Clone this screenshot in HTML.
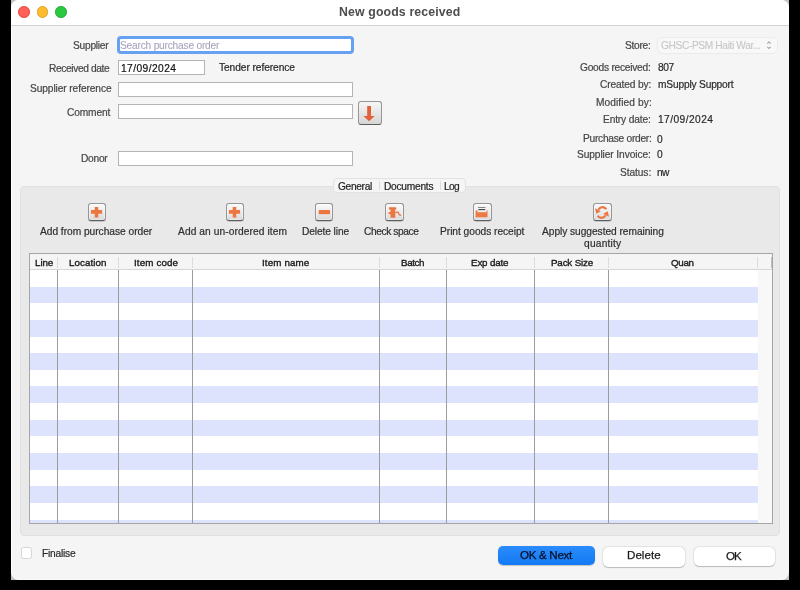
<!DOCTYPE html>
<html><head><meta charset="utf-8">
<style>
html,body{margin:0;padding:0;}
body{width:800px;height:590px;background:#000;position:relative;overflow:hidden;font-family:"Liberation Sans",sans-serif;}
div{box-sizing:border-box;}
.a{position:absolute;}
.t{position:absolute;white-space:nowrap;transform-origin:0 0;will-change:transform;}
.inp{position:absolute;background:#fff;border:1px solid #b4b4b4;}
.ico{position:absolute;width:18.4px;height:18.3px;border:1px solid #969696;border-bottom-color:#5c5c5c;border-radius:3px;background:linear-gradient(#fafafa,#ececec 50%,#dadada);box-shadow:0 .5px .5px rgba(0,0,0,.3),inset 0 0 0 .5px rgba(255,255,255,.7);}
.vl{position:absolute;top:270px;height:253px;width:1px;background:#9c9c9c;}
.hl{position:absolute;top:257px;height:11px;width:1px;background:#dcdcdc;}
.btn{position:absolute;background:#fff;border-radius:5px;box-shadow:0 0 0 .5px rgba(0,0,0,.11),0 .7px 1px rgba(0,0,0,.2);}
</style></head><body>
<!-- window -->
<div class="a" style="left:11px;top:0;width:778px;height:580px;background:#c4c4c4;"></div>
<div class="a" style="left:11px;top:0;width:778px;height:580px;background:#f5f5f5;border-radius:8px;border-left:1px solid #fff;border-bottom:1px solid #fafafa;"></div>
<div class="a" style="left:11px;top:0;width:778px;height:25px;background:#fff;border-radius:8px 8px 0 0;"></div>
<div class="a" style="left:11px;top:25px;width:778px;height:1px;background:#d3d3d3;"></div>
<div class="a" style="left:18px;top:6.1px;width:11.6px;height:11.6px;border-radius:50%;background:#fe5f57;border:.5px solid #e9473f;"></div>
<div class="a" style="left:36.5px;top:6.1px;width:11.6px;height:11.6px;border-radius:50%;background:#febc2e;border:.5px solid #dea123;"></div>
<div class="a" style="left:55px;top:6.1px;width:11.6px;height:11.6px;border-radius:50%;background:#28c840;border:.5px solid #1eae30;"></div>

<!-- inputs -->
<div class="a" style="left:117px;top:36px;width:237px;height:18px;border:3px solid #66a1f2;border-radius:4px;background:#fff;"></div>
<div class="inp" style="left:118px;top:60px;width:86.5px;height:15px;"></div>
<div class="inp" style="left:118px;top:82px;width:235px;height:15px;"></div>
<div class="inp" style="left:118px;top:104px;width:235px;height:15px;"></div>
<div class="inp" style="left:118px;top:151px;width:235px;height:15px;"></div>
<div class="ico" style="left:358px;top:101px;width:23.5px;height:23.5px;border-bottom-width:1.5px;box-shadow:none;background:linear-gradient(#f6f6f6,#e6e6e6 50%,#d6d6d6);"></div>
<svg class="a" style="left:358px;top:101px" width="24" height="24" viewBox="0 0 24 24"><path d="M9.2 5h3.8v10h3.8l-5.7 5.2-5.7-5.2h3.8z" fill="#e1613b"/></svg>

<!-- store dropdown -->
<div class="a" style="left:657.5px;top:38px;width:119.5px;height:15px;border-radius:4px;background:#f8f8f8;box-shadow:0 0 0 .5px #e2e2e2;"></div>
<svg class="a" style="left:765px;top:40px" width="8" height="11" viewBox="0 0 8 11"><path d="M2.3 3.6 4 1.9 5.7 3.6M2.3 6.8 4 8.5 5.7 6.8" fill="none" stroke="#a8a8a8" stroke-width="1.1"/></svg>

<!-- panel -->
<div class="a" style="left:19.5px;top:185.5px;width:760.5px;height:350px;background:#e9e9e9;border:1px solid #e1e1e1;border-radius:4px;"></div>
<div class="a" style="left:333px;top:178px;width:132.5px;height:15px;background:#f5f5f5;border:1px solid #e2e2e2;border-radius:4px;"></div>
<div class="a" style="left:379px;top:181px;width:1px;height:9px;background:#dcdcdc;"></div>
<div class="a" style="left:440px;top:181px;width:1px;height:9px;background:#dcdcdc;"></div>

<!-- toolbar icons -->
<div class="ico" style="left:88px;top:202.5px;"></div>
<div class="ico" style="left:225.6px;top:202.5px;"></div>
<div class="ico" style="left:315px;top:202.5px;"></div>
<div class="ico" style="left:385.4px;top:202.5px;"></div>
<div class="ico" style="left:473.4px;top:202.5px;"></div>
<div class="ico" style="left:593.4px;top:202.5px;"></div>
<svg class="a" style="left:88px;top:202.5px" width="18" height="18" viewBox="0 0 18 18"><path d="M6.7 4h3.6v3.1h3.8v3.6h-3.8v3.8H6.7v-3.8H2.9V7.1h3.8z" fill="#eb7641"/></svg>
<svg class="a" style="left:225.6px;top:202.5px" width="18" height="18" viewBox="0 0 18 18"><path d="M6.7 4h3.6v3.1h3.8v3.6h-3.8v3.8H6.7v-3.8H2.9V7.1h3.8z" fill="#eb7641"/></svg>
<svg class="a" style="left:315px;top:202.5px" width="18" height="18" viewBox="0 0 18 18"><path d="M3.7 7h11.3v4.2H3.7z" fill="#eb7641"/></svg>
<svg class="a" style="left:385.4px;top:202.5px" width="18" height="18" viewBox="0 0 18 18"><path d="M3.9 4.3h7.3v2.2H10.3v8.2H5.5v-3.3L2.4 10l3.1-1.3V6.5H3.9z" fill="#eb7641"/><path d="M10.3 9.6 13 9l1.5 3 1.6.3" fill="none" stroke="#eb7641" stroke-width="1.3"/></svg>
<svg class="a" style="left:473.4px;top:202.5px" width="18" height="18" viewBox="0 0 18 18"><path d="M5 4.1h7.5v.8H5z" fill="#6a6a6a"/><path d="M5.4 6.2h6.8v.9H5.4z" fill="#1a1a1a"/><path d="M2.6 7.4h2v1.8h8.8V7.4h1.1v6.8H2.6z" fill="#ec7a42"/></svg>
<svg class="a" style="left:593.4px;top:202.5px" width="18" height="18" viewBox="0 0 18 18"><path d="M13.3 6.3C11.5 3.3 7.2 3.4 5.4 6.8" fill="none" stroke="#eb7641" stroke-width="2.2"/><path d="M2 5.3 7.8 8.3 3.3 10.8z" fill="#eb7641"/><path d="M4.7 12.7C6.5 15.7 10.8 15.6 12.6 12.2" fill="none" stroke="#eb7641" stroke-width="2.2"/><path d="M16 13.7 10.2 10.7 14.7 8.2z" fill="#eb7641"/></svg>

<!-- table -->
<div class="a" style="left:28.5px;top:253px;width:744.5px;height:271px;background:#f8f8f8;border:1px solid #a6a6a6;"></div>
<div class="a" style="left:29.5px;top:254px;width:742.5px;height:15.5px;background:#f5f5f5;border-bottom:1px solid #d6d6d6;"></div>
<div class="a" style="left:29.5px;top:270px;width:728.8px;height:253px;background:repeating-linear-gradient(#fff 0,#fff 16.64px,#dee3fd 16.64px,#dee3fd 33.28px);"></div>
<div class="hl" style="left:57px"></div><div class="hl" style="left:118px"></div><div class="hl" style="left:192px"></div><div class="hl" style="left:379px"></div><div class="hl" style="left:446px"></div><div class="hl" style="left:534px"></div><div class="hl" style="left:608px"></div><div class="hl" style="left:757px"></div><div class="hl" style="left:771px;background:#bdbdbd"></div>
<div class="vl" style="left:57px"></div><div class="vl" style="left:118px"></div><div class="vl" style="left:192px"></div><div class="vl" style="left:379px"></div><div class="vl" style="left:446px"></div><div class="vl" style="left:534px"></div><div class="vl" style="left:608px"></div>

<!-- bottom -->
<div class="a" style="left:21.2px;top:547.2px;width:11.2px;height:11.4px;background:#fff;border:1.3px solid #d6d6d6;border-radius:2.5px;"></div>
<div class="a" style="left:498px;top:546.2px;width:97px;height:19px;border-radius:5px;background:linear-gradient(#2a8bfb,#137af3);box-shadow:0 .5px 1px rgba(0,0,0,.2);"></div>
<div class="btn" style="left:603px;top:547px;width:81.7px;height:19.5px;"></div>
<div class="btn" style="left:694px;top:547.2px;width:81.2px;height:19.3px;"></div>

<div class="t" style="left:338.60px;top:3.90px;font-size:12.3px;line-height:16px;color:#4d4d4d;font-weight:bold;letter-spacing:0.141px;">New goods received</div>
<div class="t" style="left:73.10px;top:39.25px;font-size:10.2px;line-height:13px;color:#454545;-webkit-text-stroke:0.2px;letter-spacing:-0.243px;">Supplier</div>
<div class="t" style="left:49.40px;top:61.75px;font-size:10.2px;line-height:13px;color:#454545;-webkit-text-stroke:0.2px;letter-spacing:-0.367px;">Received date</div>
<div class="t" style="left:29.90px;top:82.40px;font-size:10.2px;line-height:13px;color:#454545;-webkit-text-stroke:0.2px;letter-spacing:-0.100px;">Supplier reference</div>
<div class="t" style="left:66.50px;top:106.30px;font-size:10.2px;line-height:13px;color:#454545;-webkit-text-stroke:0.2px;letter-spacing:-0.150px;">Comment</div>
<div class="t" style="left:81.40px;top:152.00px;font-size:10.2px;line-height:13px;color:#454545;-webkit-text-stroke:0.2px;letter-spacing:-0.250px;">Donor</div>
<div class="t" style="left:120.25px;top:39.25px;font-size:10.2px;line-height:13px;color:#a9a4bc;-webkit-text-stroke:0.1px;letter-spacing:-0.212px;">Search purchase order</div>
<div class="t" style="left:121.00px;top:61.50px;font-size:10.2px;line-height:13px;color:#111;-webkit-text-stroke:0.2px;letter-spacing:0.444px;">17/09/2024</div>
<div class="t" style="left:219.00px;top:60.50px;font-size:10.2px;line-height:13px;color:#262626;-webkit-text-stroke:0.2px;letter-spacing:-0.067px;">Tender reference</div>
<div class="t" style="left:625.00px;top:39.25px;font-size:10.2px;line-height:13px;color:#454545;-webkit-text-stroke:0.2px;letter-spacing:-0.280px;">Store:</div>
<div class="t" style="left:580.00px;top:60.50px;font-size:10.2px;line-height:13px;color:#454545;-webkit-text-stroke:0.2px;letter-spacing:-0.243px;">Goods received:</div>
<div class="t" style="left:600.00px;top:78.00px;font-size:10.2px;line-height:13px;color:#454545;-webkit-text-stroke:0.2px;letter-spacing:-0.140px;">Created by:</div>
<div class="t" style="left:595.90px;top:95.70px;font-size:10.2px;line-height:13px;color:#454545;-webkit-text-stroke:0.2px;letter-spacing:0.073px;">Modified by:</div>
<div class="t" style="left:603.20px;top:113.30px;font-size:10.2px;line-height:13px;color:#454545;-webkit-text-stroke:0.2px;letter-spacing:-0.150px;">Entry date:</div>
<div class="t" style="left:582.50px;top:131.50px;font-size:10.2px;line-height:13px;color:#454545;-webkit-text-stroke:0.2px;letter-spacing:-0.264px;">Purchase order:</div>
<div class="t" style="left:577.30px;top:148.30px;font-size:10.2px;line-height:13px;color:#454545;-webkit-text-stroke:0.2px;letter-spacing:-0.094px;">Supplier Invoice:</div>
<div class="t" style="left:620.30px;top:166.30px;font-size:10.2px;line-height:13px;color:#454545;-webkit-text-stroke:0.2px;letter-spacing:-0.083px;">Status:</div>
<div class="t" style="left:657.50px;top:60.50px;font-size:10.2px;line-height:13px;color:#2a2a2a;-webkit-text-stroke:0.2px;letter-spacing:-0.375px;">807</div>
<div class="t" style="left:657.50px;top:78.00px;font-size:10.2px;line-height:13px;color:#2a2a2a;-webkit-text-stroke:0.2px;letter-spacing:-0.179px;">mSupply Support</div>
<div class="t" style="left:657.50px;top:113.30px;font-size:10.2px;line-height:13px;color:#2a2a2a;-webkit-text-stroke:0.2px;letter-spacing:0.444px;">17/09/2024</div>
<div class="t" style="left:657.00px;top:132.50px;font-size:10.2px;line-height:13px;color:#2a2a2a;-webkit-text-stroke:0.2px;">0</div>
<div class="t" style="left:657.00px;top:148.30px;font-size:10.2px;line-height:13px;color:#2a2a2a;-webkit-text-stroke:0.2px;">0</div>
<div class="t" style="left:657.20px;top:166.30px;font-size:10.2px;line-height:13px;color:#2a2a2a;-webkit-text-stroke:0.2px;letter-spacing:-0.700px;">nw</div>
<div class="t" style="left:660.50px;top:39.00px;font-size:10.2px;line-height:13px;color:#c6c6c6;-webkit-text-stroke:0.1px;letter-spacing:-0.375px;">GHSC-PSM Haiti War...</div>
<div class="t" style="left:338.40px;top:180.10px;font-size:10.2px;line-height:13px;color:#222;-webkit-text-stroke:0.2px;letter-spacing:-0.333px;">General</div>
<div class="t" style="left:383.60px;top:180.10px;font-size:10.2px;line-height:13px;color:#222;-webkit-text-stroke:0.2px;letter-spacing:-0.250px;">Documents</div>
<div class="t" style="left:444.40px;top:180.10px;font-size:10.2px;line-height:13px;color:#222;-webkit-text-stroke:0.2px;letter-spacing:-0.700px;">Log</div>
<div class="t" style="left:39.50px;top:225.40px;font-size:10.2px;line-height:13px;color:#2e2e2e;-webkit-text-stroke:0.2px;letter-spacing:-0.023px;">Add from purchase order</div>
<div class="t" style="left:178.10px;top:225.40px;font-size:10.2px;line-height:13px;color:#2e2e2e;-webkit-text-stroke:0.2px;letter-spacing:0.090px;">Add an un-ordered item</div>
<div class="t" style="left:301.50px;top:225.40px;font-size:10.2px;line-height:13px;color:#2e2e2e;-webkit-text-stroke:0.2px;letter-spacing:-0.100px;">Delete line</div>
<div class="t" style="left:363.50px;top:225.40px;font-size:10.2px;line-height:13px;color:#2e2e2e;-webkit-text-stroke:0.2px;letter-spacing:-0.400px;">Check space</div>
<div class="t" style="left:440.00px;top:225.40px;font-size:10.2px;line-height:13px;color:#2e2e2e;-webkit-text-stroke:0.2px;letter-spacing:-0.028px;">Print goods receipt</div>
<div class="t" style="left:541.50px;top:225.40px;font-size:10.2px;line-height:13px;color:#2e2e2e;-webkit-text-stroke:0.2px;letter-spacing:-0.042px;">Apply suggested remaining</div>
<div class="t" style="left:584.00px;top:236.50px;font-size:10.2px;line-height:13px;color:#2e2e2e;-webkit-text-stroke:0.2px;letter-spacing:0.214px;">quantity</div>
<div class="t" style="left:34.50px;top:256.20px;font-size:9.8px;line-height:13px;color:#1a1a1a;-webkit-text-stroke:0.35px;letter-spacing:-0.067px;">Line</div>
<div class="t" style="left:69.00px;top:256.20px;font-size:9.8px;line-height:13px;color:#1a1a1a;-webkit-text-stroke:0.35px;letter-spacing:0.071px;">Location</div>
<div class="t" style="left:133.50px;top:256.20px;font-size:9.8px;line-height:13px;color:#1a1a1a;-webkit-text-stroke:0.35px;letter-spacing:0.125px;">Item code</div>
<div class="t" style="left:262.00px;top:256.20px;font-size:9.8px;line-height:13px;color:#1a1a1a;-webkit-text-stroke:0.35px;letter-spacing:0.125px;">Item name</div>
<div class="t" style="left:401.00px;top:256.20px;font-size:9.8px;line-height:13px;color:#1a1a1a;-webkit-text-stroke:0.35px;letter-spacing:-0.400px;">Batch</div>
<div class="t" style="left:471.00px;top:256.20px;font-size:9.8px;line-height:13px;color:#1a1a1a;-webkit-text-stroke:0.35px;letter-spacing:-0.157px;">Exp date</div>
<div class="t" style="left:550.60px;top:256.20px;font-size:9.8px;line-height:13px;color:#1a1a1a;-webkit-text-stroke:0.35px;letter-spacing:-0.175px;">Pack Size</div>
<div class="t" style="left:671.40px;top:256.20px;font-size:9.8px;line-height:13px;color:#1a1a1a;-webkit-text-stroke:0.35px;letter-spacing:-0.300px;">Quan</div>
<div class="t" style="left:41.70px;top:547.10px;font-size:10.2px;line-height:13px;color:#2a2a2a;-webkit-text-stroke:0.2px;letter-spacing:-0.214px;">Finalise</div>
<div class="t" style="left:520.00px;top:546.70px;font-size:11.6px;line-height:15px;color:#0a0f25;-webkit-text-stroke:0.25px;letter-spacing:-0.312px;">OK &amp; Next</div>
<div class="t" style="left:626.70px;top:547.40px;font-size:11.6px;line-height:15px;color:#1a1a1a;-webkit-text-stroke:0.25px;letter-spacing:0.020px;">Delete</div>
<div class="t" style="left:726.25px;top:547.50px;font-size:11.6px;line-height:15px;color:#1a1a1a;-webkit-text-stroke:0.25px;letter-spacing:-1.000px;">OK</div>
</body></html>
